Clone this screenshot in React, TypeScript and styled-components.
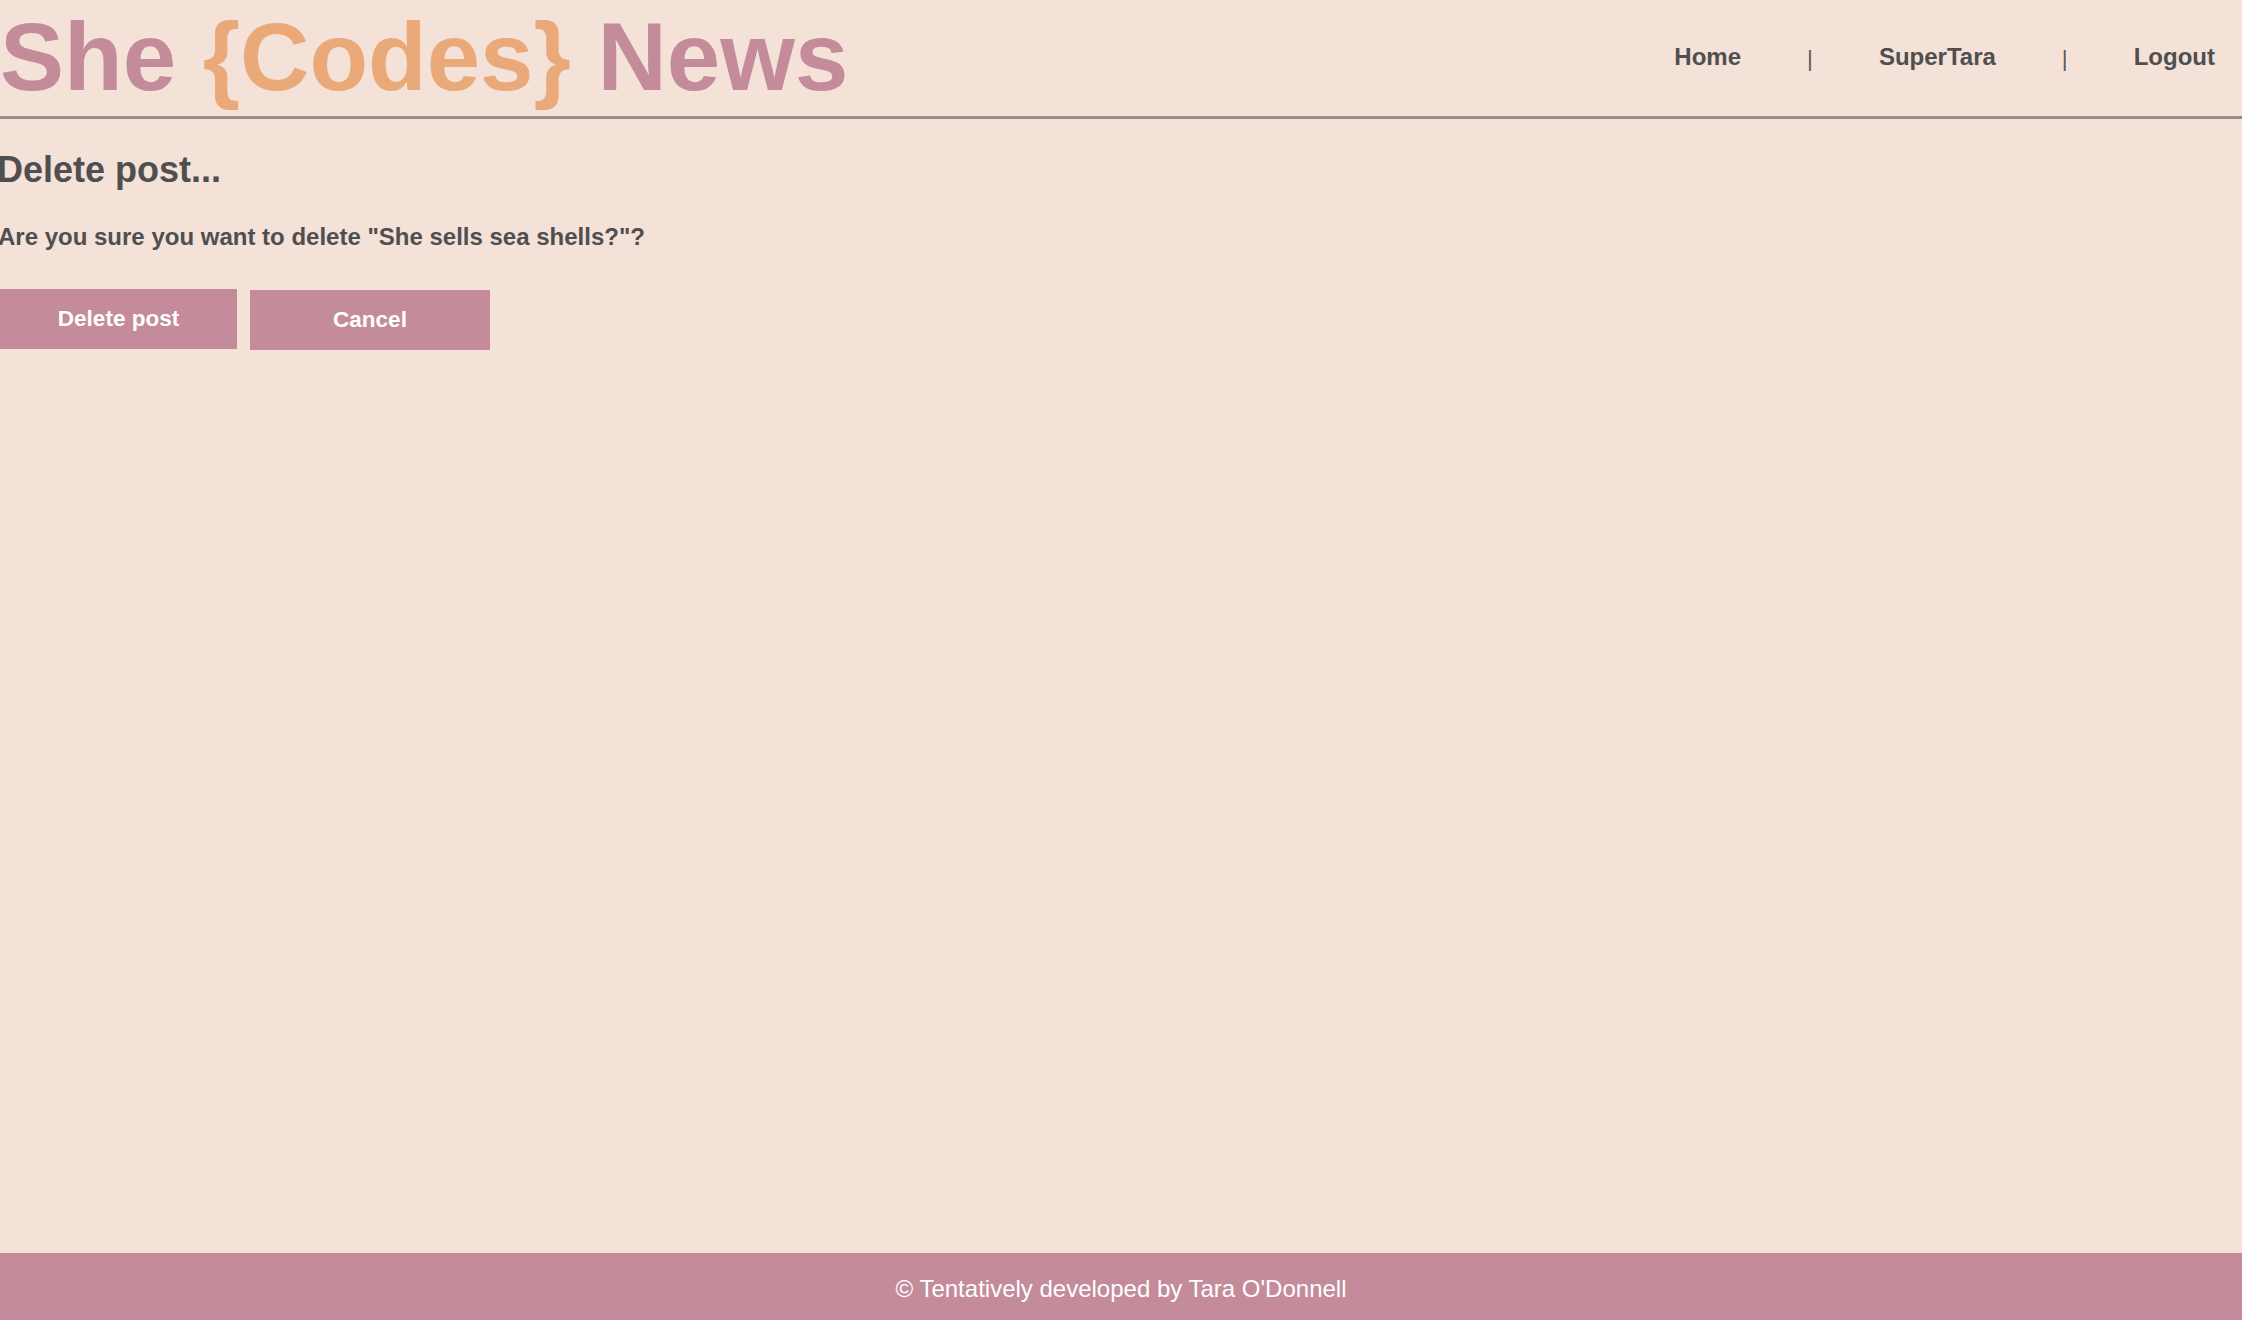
import React from "react";
import styled, { createGlobalStyle } from "styled-components";

const GlobalStyle = createGlobalStyle`
  html, body {
    margin: 0;
    padding: 0;
    background: #f4e1d8;
  }
  body {
    font-family: "Liberation Sans", Arial, sans-serif;
    color: #4f4f4f;
  }
  * { box-sizing: border-box; }
`;

const Page = styled.div`
  min-height: 100vh;
  display: flex;
  flex-direction: column;
  background: #f4e1d8;
`;

const Header = styled.header`
  display: flex;
  justify-content: space-between;
  align-items: flex-start;
  height: 119px;
  border-bottom: 3px solid #948f8c;
  padding-right: 27px;
`;

const Title = styled.h1`
  margin: 9px 0 0 0;
  font-size: 96px;
  line-height: 96px;
  font-weight: 700;
  color: #c48b9b;
  white-space: nowrap;
`;

const Braces = styled.span`
  color: #e9a978;
`;

const Nav = styled.nav`
  display: flex;
  align-items: flex-start;
  gap: 66px;
  margin-top: 43px;
`;

const NavLink = styled.a`
  font-size: 24px;
  font-weight: 700;
  color: #4f4f4f;
  text-decoration: none;
  cursor: pointer;
`;

const Separator = styled.span`
  font-size: 22.5px;
  line-height: 22.5px;
  font-weight: 400;
  color: #5a5a5a;
  margin-top: 5px;
`;

const Main = styled.main`
  display: flex;
  flex-direction: column;
  align-items: flex-start;
`;

const Heading = styled.h2`
  margin: 30px 0 0 -3px;
  font-size: 36px;
  font-weight: 700;
  color: #4f4f4f;
`;

const Message = styled.p`
  margin: 32px 0 0 -2px;
  font-size: 24px;
  font-weight: 700;
  color: #4f4f4f;
`;

const Actions = styled.div`
  display: flex;
  align-items: flex-start;
  gap: 13px;
  margin-top: 38px;
`;

const ActionButton = styled.button<{ $width: number; $offset?: number }>`
  width: ${(p) => p.$width}px;
  height: 60px;
  margin-top: ${(p) => p.$offset ?? 0}px;
  border: none;
  background: #c48b9b;
  color: #ffffff;
  font-family: "Liberation Sans", Arial, sans-serif;
  font-size: 22.5px;
  font-weight: 700;
  padding: 0;
  cursor: pointer;
`;

const Footer = styled.footer`
  margin-top: auto;
  height: 67px;
  padding-top: 22px;
  background: #c48b9b;
  color: #ffffff;
  font-size: 24px;
  text-align: center;
`;

export default function App() {
  return (
    <Page>
      <GlobalStyle />
      <Header>
        <Title>
          She <Braces>{"{Codes}"}</Braces> News
        </Title>
        <Nav>
          <NavLink>Home</NavLink>
          <Separator>|</Separator>
          <NavLink>SuperTara</NavLink>
          <Separator>|</Separator>
          <NavLink>Logout</NavLink>
        </Nav>
      </Header>
      <Main>
        <Heading>Delete post...</Heading>
        <Message>Are you sure you want to delete "She sells sea shells?"?</Message>
        <Actions>
          <ActionButton $width={237}>Delete post</ActionButton>
          <ActionButton $width={240} $offset={1}>Cancel</ActionButton>
        </Actions>
      </Main>
      <Footer>© Tentatively developed by Tara O'Donnell</Footer>
    </Page>
  );
}
